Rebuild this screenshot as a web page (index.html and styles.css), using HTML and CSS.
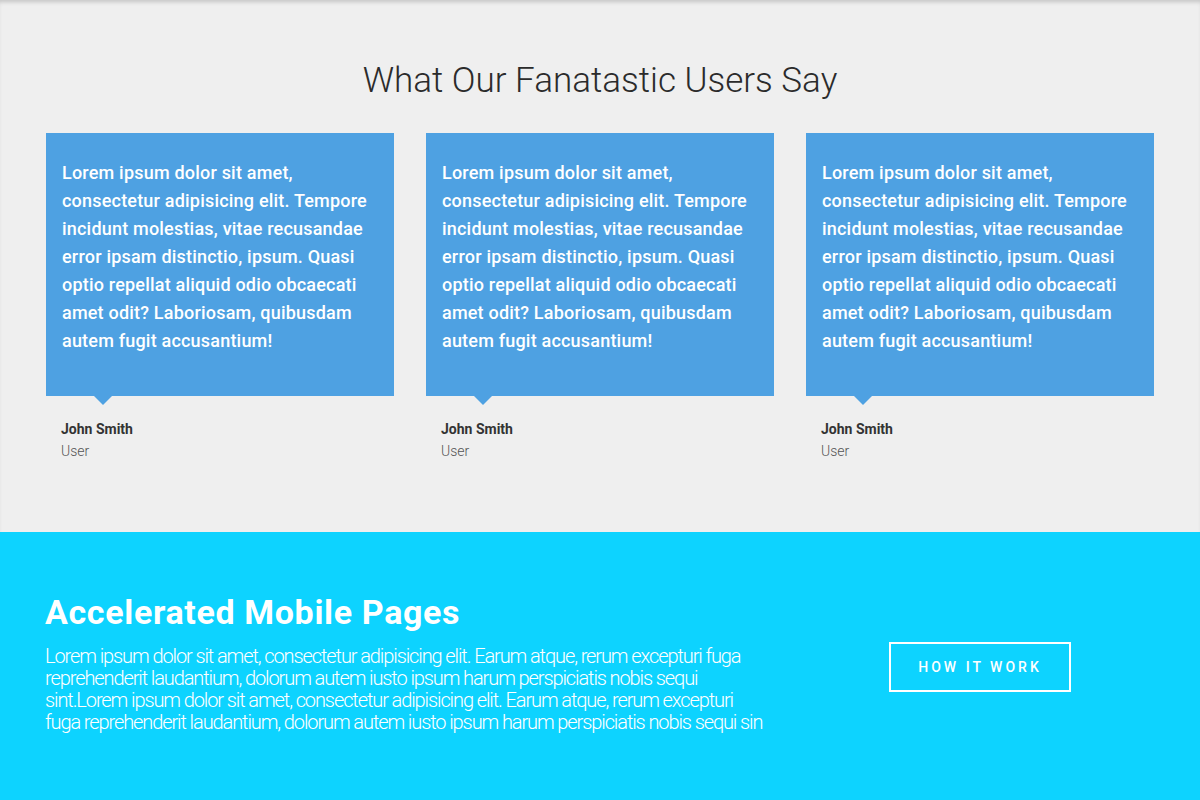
FILE: index.html
```html
<!DOCTYPE html>
<html lang="en">
<head>
<meta charset="utf-8">
<title>Testimonials</title>
<link rel="stylesheet" href="styles.css">
</head>
<body>
<section class="testimonials">
  <h2 class="section-title">What Our Fanatastic Users Say</h2>
  <div class="cards">
    <div class="testimonial">
      <div class="bubble">Lorem ipsum dolor sit amet, consectetur adipisicing elit. Tempore incidunt molestias, vitae recusandae error ipsam distinctio, ipsum. Quasi optio repellat aliquid odio obcaecati amet odit? Laboriosam, quibusdam autem fugit accusantium!</div>
      <div class="author">
        <div class="name">John Smith</div>
        <div class="role">User</div>
      </div>
    </div>
    <div class="testimonial">
      <div class="bubble">Lorem ipsum dolor sit amet, consectetur adipisicing elit. Tempore incidunt molestias, vitae recusandae error ipsam distinctio, ipsum. Quasi optio repellat aliquid odio obcaecati amet odit? Laboriosam, quibusdam autem fugit accusantium!</div>
      <div class="author">
        <div class="name">John Smith</div>
        <div class="role">User</div>
      </div>
    </div>
    <div class="testimonial">
      <div class="bubble">Lorem ipsum dolor sit amet, consectetur adipisicing elit. Tempore incidunt molestias, vitae recusandae error ipsam distinctio, ipsum. Quasi optio repellat aliquid odio obcaecati amet odit? Laboriosam, quibusdam autem fugit accusantium!</div>
      <div class="author">
        <div class="name">John Smith</div>
        <div class="role">User</div>
      </div>
    </div>
  </div>
</section>
<section class="amp">
  <div class="amp-text">
    <h2 class="amp-title">Accelerated Mobile Pages</h2>
    <p class="amp-desc">Lorem ipsum dolor sit amet, consectetur adipisicing elit. Earum atque, rerum excepturi fuga<br>reprehenderit laudantium, dolorum autem iusto ipsum harum perspiciatis nobis sequi<br>sint.Lorem ipsum dolor sit amet, consectetur adipisicing elit. Earum atque, rerum excepturi<br>fuga reprehenderit laudantium, dolorum autem iusto ipsum harum perspiciatis nobis sequi sin</p>
  </div>
  <div class="amp-action">
    <a class="btn-outline" href="#">HOW IT WORK</a>
  </div>
</section>
</body>
</html>
```

FILE: styles.css
```css
* { box-sizing: border-box; }

html, body {
  margin: 0;
  padding: 0;
}

body {
  font-family: Roboto, "Liberation Sans", sans-serif;
  background: #efefef;
  width: 1200px;
  height: 800px;
  overflow: hidden;
}

.testimonials {
  height: 532px;
  padding: 61px 46px 0;
  background: #efefef;
  box-shadow: inset 0 4px 4px -2px rgba(0, 0, 0, 0.18);
}

.section-title {
  margin: 0 0 32px;
  text-align: center;
  font-size: 35px;
  font-weight: 300;
  line-height: 40px;
  color: #2b2b2b;
}

.cards {
  display: flex;
  gap: 32px;
}

.testimonial {
  width: 348px;
}

.bubble {
  position: relative;
  background: #4ea1e2;
  color: #fff;
  font-size: 18px;
  font-weight: 500;
  line-height: 28px;
  letter-spacing: 0.2px;
  padding: 26px 16px 40px;
  height: 263px;
}

.bubble::after {
  content: "";
  position: absolute;
  left: 48px;
  bottom: -9px;
  border-left: 9px solid transparent;
  border-right: 9px solid transparent;
  border-top: 9px solid #4ea1e2;
}

.author {
  padding: 22px 15px 0;
}

.name {
  font-size: 14px;
  font-weight: 700;
  color: #333;
  line-height: 22px;
}

.role {
  font-size: 14px;
  font-weight: 300;
  color: #555;
  line-height: 22px;
}

.amp {
  height: 268px;
  background: #0dd3ff;
  display: flex;
  padding: 60px 45px 0;
  color: #fff;
}

.amp-text {
  width: 760px;
}

.amp-title {
  margin: 0 0 13px;
  font-size: 34px;
  font-weight: 700;
  line-height: 40px;
  letter-spacing: 0.65px;
}

.amp-desc {
  margin: 0;
  font-size: 20px;
  font-weight: 300;
  line-height: 22px;
  letter-spacing: -1.1px;
  white-space: nowrap;
}

.amp-action {
  flex: 1;
  display: flex;
  justify-content: center;
  align-items: flex-start;
  padding-top: 50px;
}

.btn-outline {
  display: inline-block;
  width: 182px;
  height: 50px;
  border: 2px solid #fff;
  color: #fff;
  text-decoration: none;
  font-size: 14px;
  font-weight: 500;
  letter-spacing: 3px;
  line-height: 46px;
  text-align: center;
}
```
